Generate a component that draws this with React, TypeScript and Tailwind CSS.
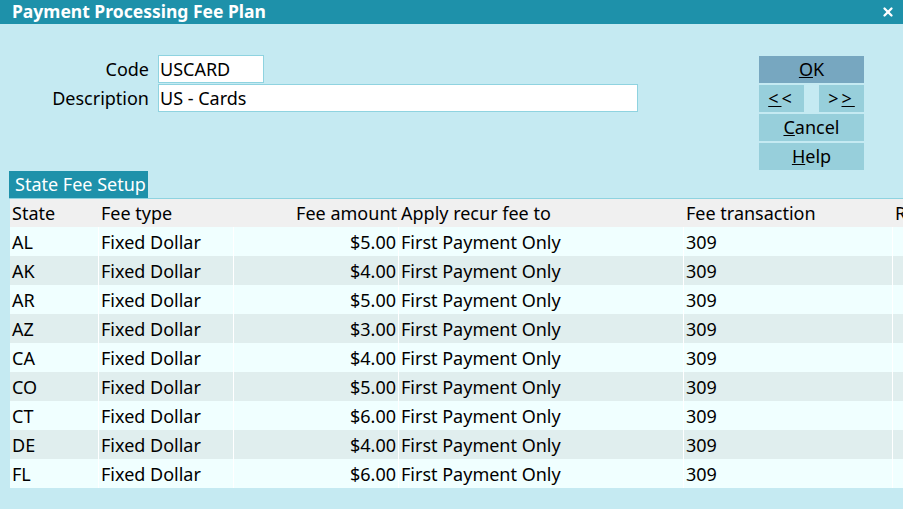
import { X } from 'lucide-react'

const rows = [
  ['AL', '$5.00'],
  ['AK', '$4.00'],
  ['AR', '$5.00'],
  ['AZ', '$3.00'],
  ['CA', '$4.00'],
  ['CO', '$5.00'],
  ['CT', '$6.00'],
  ['DE', '$4.00'],
  ['FL', '$6.00'],
]

const Btn = ({
  children,
  dark = false,
  className = '',
}: {
  children: React.ReactNode
  dark?: boolean
  className?: string
}) => (
  <div
    className={`h-[27px] flex items-center justify-center text-[18px] text-black ${
      dark ? 'bg-[#77a7c0]' : 'bg-[#97cfdb]'
    } ${className}`}
  >
    {children}
  </div>
)

export default function App() {
  return (
    <div
      className="w-[903px] h-[509px] bg-[#c5eaf2] overflow-hidden flex flex-col"
      style={{ fontFamily: '"Noto Sans", "Open Sans", sans-serif' }}
    >
      <div className="h-6 bg-[#1e91aa] flex items-center justify-between pl-3 pr-2 text-white">
        <span className="font-bold text-[17.5px] leading-none">Payment Processing Fee Plan</span>
        <X size={14} strokeWidth={4} />
      </div>

      <div className="flex pt-[31px] h-[147px]">
        <div className="flex flex-col gap-px w-[759px]">
          <div className="flex items-center h-[28px]">
            <span className="w-[149px] text-right text-[18px]">Code</span>
            <div className="ml-[9px] w-[106px] h-full bg-white border border-[#8fd3e0] flex items-center px-px text-[18px]">
              USCARD
            </div>
          </div>
          <div className="flex items-center h-[28px]">
            <span className="w-[149px] text-right text-[18px]">Description</span>
            <div className="ml-[9px] w-[480px] h-full bg-white border border-[#8fd3e0] flex items-center px-px text-[18px]">
              US - Cards
            </div>
          </div>
        </div>
        <div className="flex flex-col gap-[2px] w-[105px] pt-px">
          <Btn dark>
            <span><u>O</u>K</span>
          </Btn>
          <div className="flex justify-between">
            <Btn className="w-[45px] tracking-[3px]">
              <span><u>&lt;</u>&lt;</span>
            </Btn>
            <Btn className="w-[45px] tracking-[3px]">
              <span>&gt;<u>&gt;</u></span>
            </Btn>
          </div>
          <Btn>
            <span><u>C</u>ancel</span>
          </Btn>
          <Btn>
            <span><u>H</u>elp</span>
          </Btn>
        </div>
      </div>

      <div className="pl-[9px]">
        <div className="w-[139px] h-[27px] bg-[#1e91aa] text-white text-[18px] flex items-center pl-[6px] whitespace-nowrap">
          State Fee Setup
        </div>
      </div>
      <div className="border-t border-[#8fd3e0] ml-[9px] pl-px">
        <div className="flex h-[28px] items-center bg-[#f0f0f0] text-[18px] whitespace-nowrap">
          <div className="w-[89px] pl-[2px]">State</div>
          <div className="w-[135px] pl-[2px]">Fee type</div>
          <div className="w-[165px] text-right pr-[2px]">Fee amount</div>
          <div className="w-[285px] pl-[2px]">Apply recur fee to</div>
          <div className="w-[209px] pl-[2px]">Fee transaction</div>
          <div className="flex-1 pl-[2px] overflow-hidden">Rate</div>
        </div>
        {rows.map(([st, amt], i) => (
          <div
            key={st}
            className={`flex h-[29px] items-center text-[18px] whitespace-nowrap ${
              i % 2 ? 'bg-[#e0eeee]' : 'bg-[#f0ffff]'
            }`}
          >
            <div className="w-[89px] h-full flex items-center pl-[2px] pt-px border-r border-white">{st}</div>
            <div className="w-[135px] h-full flex items-center pl-[2px] pt-px border-r border-white">Fixed Dollar</div>
            <div className="w-[165px] h-full flex items-center justify-end pr-[2px] pt-px border-r border-white">{amt}</div>
            <div className="w-[285px] h-full flex items-center pl-[2px] pt-px border-r border-white">First Payment Only</div>
            <div className="w-[209px] h-full flex items-center pl-[2px] pt-px border-r border-white">309</div>
            <div className="flex-1 h-full" />
          </div>
        ))}
      </div>
    </div>
  )
}
